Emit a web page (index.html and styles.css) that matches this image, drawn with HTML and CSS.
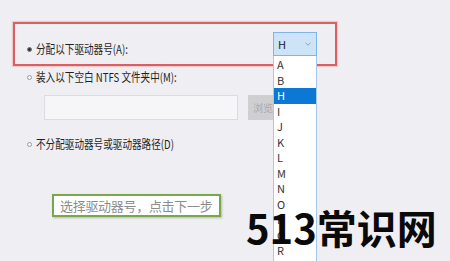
FILE: index.html
```html
<!DOCTYPE html>
<html lang="zh-CN">
<head>
<meta charset="utf-8">
<link rel="stylesheet" href="styles.css">
</head>
<body>
<div class="page">
  <div class="opt-box">
    <div class="row-label">
      <span class="radio checked"></span>
      <span class="label">分配以下驱动器号(A):</span>
    </div>
    <div class="select">
      <span class="sel-val">H</span>
      <svg class="chev" width="6" height="4" viewBox="0 0 6 4"><path d="M0.5 0.8 L3 3.2 L5.5 0.8" fill="none" stroke="#8a9aa8" stroke-width="0.9"/></svg>
    </div>
  </div>
  <div class="row-label r2">
    <span class="radio"></span>
    <span class="label">装入以下空白 NTFS 文件夹中(M):</span>
  </div>
  <div class="path-row">
    <div class="field"></div>
    <div class="btn">浏览(R)...</div>
  </div>
  <div class="row-label r3">
    <span class="radio"></span>
    <span class="label">不分配驱动器号或驱动器路径(D)</span>
  </div>
  <div class="callout">选择驱动器号，点击下一步</div>

  <ul class="list">
    <li>A</li><li>B</li><li class="hl">H</li><li>I</li><li>J</li><li>K</li><li>L</li><li>M</li><li>N</li><li>O</li><li>P</li><li>Q</li><li>R</li><li>S</li>
  </ul>
  <div class="watermark">513常识网</div>
</div>
</body>
</html>
```
FILE: styles.css
```css
html, body {
  margin: 0;
  padding: 0;
}
body {
  background: #efeef2;
  font-family: "Noto Sans CJK SC", "Noto Sans", sans-serif;
  color: #1f1f1f;
}
.page {
  position: relative;
  width: 450px;
  height: 261px;
  overflow: hidden;
  box-sizing: border-box;
  padding: 22px 0 0 13px;
}
.opt-box {
  box-sizing: border-box;
  width: 324px;
  height: 44px;
  border: 2px solid #dc5d62;
  box-shadow: 0 0 1px 1px rgba(230, 140, 140, 0.35);
  display: flex;
  justify-content: space-between;
  padding: 8px 18px 8px 12px;
}
.opt-box .row-label {
  align-self: flex-end;
  padding-left: 0;
}
.row-label {
  display: flex;
  align-items: center;
  gap: 4px;
  height: 14px;
  padding-left: 14px;
}
.radio {
  width: 5px;
  height: 5px;
  border-radius: 50%;
  border: 1px solid #9a9a9a;
  box-sizing: border-box;
  background: #f7f7f7;
  flex: none;
}
.radio.checked {
  border: 1px solid #777;
  background: #333;
}
.label {
  font-size: 12px;
  line-height: 14px;
  white-space: nowrap;
  transform: scaleX(0.8);
  transform-origin: left center;
}
.select {
  box-sizing: border-box;
  width: 44px;
  height: 24px;
  background: #cde3f7;
  border: 1px solid #80b5e8;
  display: flex;
  align-items: center;
  justify-content: space-between;
  padding: 0 5px 0 4px;
}
.sel-val {
  font-size: 11px;
  color: #222;
}
.chev {
  display: block;
}
.r2 {
  margin-top: 4px;
}
.path-row {
  display: flex;
  gap: 10px;
  margin: 11px 0 0 31px;
}
.field {
  box-sizing: border-box;
  width: 194px;
  height: 25px;
  background: #f6f6f8;
  border: 1px solid #dcdce0;
}
.btn {
  box-sizing: border-box;
  width: 60px;
  height: 25px;
  background: #cfcfd2;
  color: #aaaaae;
  font-size: 10px;
  line-height: 25px;
  padding-left: 5px;
  white-space: nowrap;
  overflow: hidden;
}
.r3 {
  margin-top: 17px;
}
.callout {
  box-sizing: border-box;
  width: 169px;
  height: 23px;
  margin: 43px 0 0 39px;
  background: #ffffff;
  border: 2px solid #79a84a;
  box-shadow: 1px 1px 2px rgba(80, 80, 80, 0.35);
  color: #8c8c8c;
  font-size: 13px;
  line-height: 19px;
  padding-left: 6px;
  letter-spacing: -0.3px;
  white-space: nowrap;
}
.list {
  position: absolute;
  left: 273px;
  top: 56px;
  width: 44px;
  height: 220px;
  margin: 0;
  padding: 1px 0 0 0;
  box-sizing: border-box;
  list-style: none;
  background: #ffffff;
  border: 1px solid #a9c8e6;
  border-top: none;
  overflow: hidden;
}
.list li {
  height: 15.5px;
  line-height: 15.5px;
  font-size: 11px;
  padding-left: 3px;
  color: #333;
}
.list li.hl {
  background: #0a78d4;
  color: #fff;
}
.watermark {
  position: absolute;
  left: 246px;
  top: 201px;
  font-size: 40px;
  font-weight: 700;
  line-height: 52px;
  color: #0a0a0a;
  white-space: nowrap;
}
```
